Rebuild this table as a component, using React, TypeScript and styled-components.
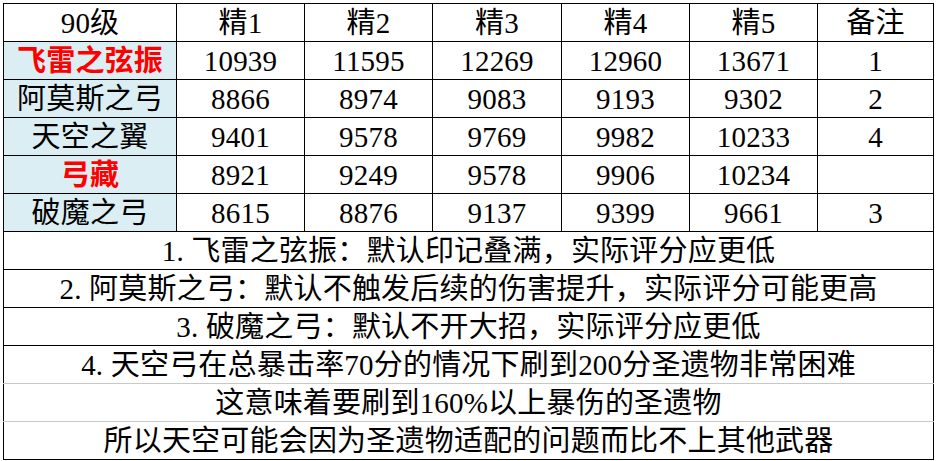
import React from "react";
import styled, { createGlobalStyle } from "styled-components";

const GlobalStyle = createGlobalStyle`
  html, body {
    margin: 0;
    padding: 0;
    background: #ffffff;
  }
  body {
    font-family: "Liberation Serif", "Noto Sans CJK SC", serif;
  }
`;

const Sheet = styled.div`
  padding: 3px 3px 0 3px;
`;

const Table = styled.table`
  border-collapse: collapse;
  table-layout: fixed;
  width: 930px;
  font-family: "Liberation Serif", "Noto Sans CJK SC", serif;
  font-size: 29px;
  letter-spacing: 0.2px;
  color: #000000;
`;

const Row = styled.tr`
  height: 38px;
`;

const Cell = styled.td<{ $name?: boolean; $red?: boolean; $soft?: "top" | "bottom" | "both" }>`
  border: 1px solid #000000;
  padding: 0;
  height: 37px;
  text-align: center;
  vertical-align: middle;
  line-height: 36px;
  white-space: nowrap;
  overflow: hidden;
  background: ${(p) => (p.$name ? "#daeef3" : "#ffffff")};
  color: ${(p) => (p.$red ? "#ff0000" : "#000000")};
  font-weight: ${(p) => (p.$red ? 700 : 400)};
  border-top-color: ${(p) => (p.$soft === "top" || p.$soft === "both" ? "#c8c8c8" : "#000000")};
  border-bottom-color: ${(p) => (p.$soft === "bottom" || p.$soft === "both" ? "#c8c8c8" : "#000000")};
`;

const colWidths = [173, 128, 128, 129, 128, 128, 116];

const headers = ["90级", "精1", "精2", "精3", "精4", "精5", "备注"];

interface Weapon {
  name: string;
  red: boolean;
  values: number[];
  note: string;
}

const weapons: Weapon[] = [
  { name: "飞雷之弦振", red: true, values: [10939, 11595, 12269, 12960, 13671], note: "1" },
  { name: "阿莫斯之弓", red: false, values: [8866, 8974, 9083, 9193, 9302], note: "2" },
  { name: "天空之翼", red: false, values: [9401, 9578, 9769, 9982, 10233], note: "4" },
  { name: "弓藏", red: true, values: [8921, 9249, 9578, 9906, 10234], note: "" },
  { name: "破魔之弓", red: false, values: [8615, 8876, 9137, 9399, 9661], note: "3" },
];

const notes = [
  "1. 飞雷之弦振：默认印记叠满，实际评分应更低",
  "2. 阿莫斯之弓：默认不触发后续的伤害提升，实际评分可能更高",
  "3. 破魔之弓：默认不开大招，实际评分应更低",
  "4. 天空弓在总暴击率70分的情况下刷到200分圣遗物非常困难",
  "这意味着要刷到160%以上暴伤的圣遗物",
  "所以天空可能会因为圣遗物适配的问题而比不上其他武器",
];

const softFor = (i: number): "top" | "bottom" | "both" | undefined => {
  if (i === 3) return "bottom";
  if (i === 4) return "both";
  if (i === 5) return "top";
  return undefined;
};

const App = () => {
  return (
    <Sheet>
      <GlobalStyle />
      <Table>
        <colgroup>
          {colWidths.map((w, i) => (
            <col key={i} style={{ width: w }} />
          ))}
        </colgroup>
        <tbody>
          <Row>
            {headers.map((h) => (
              <Cell key={h}>{h}</Cell>
            ))}
          </Row>
          {weapons.map((w) => (
            <Row key={w.name}>
              <Cell $name $red={w.red}>
                {w.name}
              </Cell>
              {w.values.map((v, i) => (
                <Cell key={i}>{v}</Cell>
              ))}
              <Cell>{w.note}</Cell>
            </Row>
          ))}
          {notes.map((n, i) => (
            <Row key={i}>
              <Cell colSpan={7} $soft={softFor(i)}>
                {n}
              </Cell>
            </Row>
          ))}
        </tbody>
      </Table>
    </Sheet>
  );
};

export default App;
